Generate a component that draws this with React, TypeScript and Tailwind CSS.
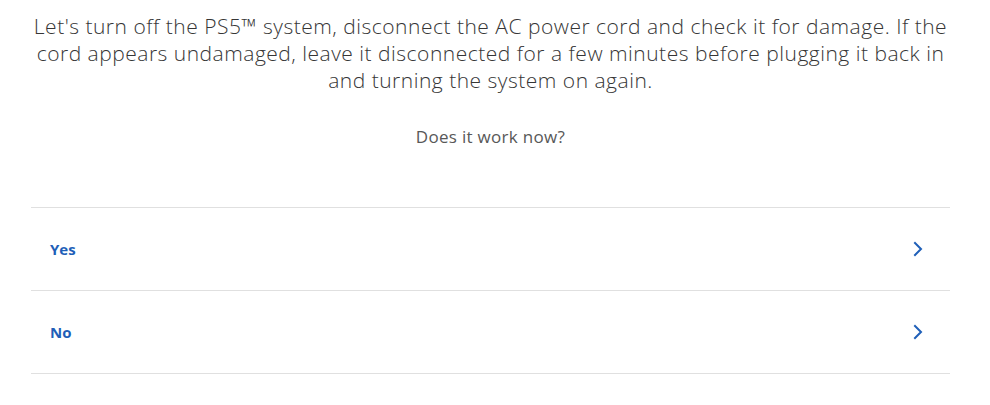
import React from 'react';

const options = ['Yes', 'No'];

const Chevron = () => (
  <svg width="10" height="16" viewBox="0 0 10 16" fill="none" className="shrink-0">
    <path d="M2 2l6 6-6 6" stroke="#1f5fb8" strokeWidth="2" strokeLinecap="square" />
  </svg>
);

export default function App() {
  return (
    <div className="w-[990px] h-[405px] bg-white font-['Open_Sans',sans-serif]">
      <div className="pl-[31px] pr-[40px] pt-[13px]">
        <p className="text-center text-[21px] leading-[27px] font-light text-[#363636] tracking-[0.5px]">
          Let's turn off the PS5™ system, disconnect the AC power cord and check it for damage. If the cord appears undamaged, leave it disconnected for a few minutes before plugging it back in and turning the system on again.
        </p>
        <p className="text-center text-[17px] leading-[22px] text-[#585858] tracking-[0.3px] mt-[32px]">Does it work now?</p>

        <div className="mt-[59px] border-t border-[#e0e0e0]">
          {options.map((o) => (
            <div key={o} className="h-[83px] flex items-center justify-between pl-[19px] pr-[27px] border-b border-[#e0e0e0]">
              <span className="text-[15px] font-bold text-[#1f5fb8]">{o}</span>
              <Chevron />
            </div>
          ))}
        </div>
      </div>
    </div>
  );
}
